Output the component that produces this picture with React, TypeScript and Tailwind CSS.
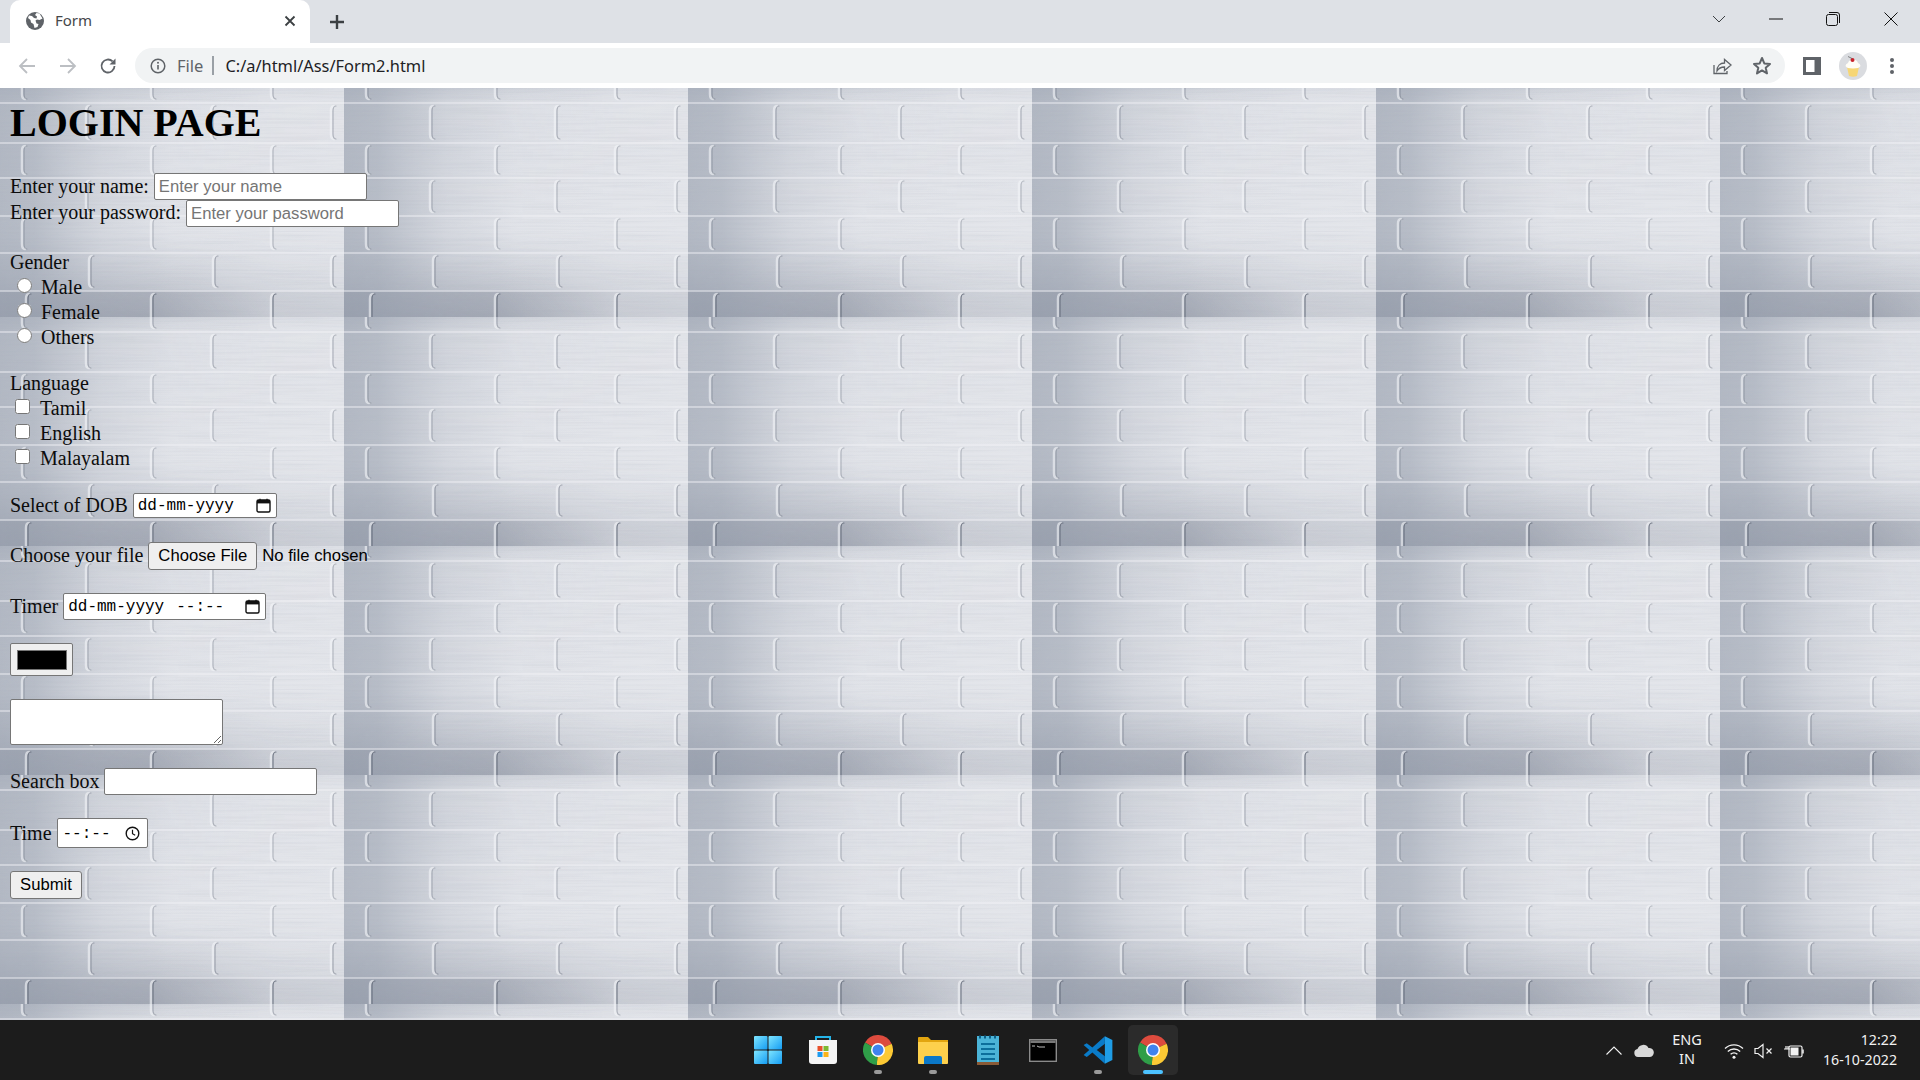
const SERIF = "font-['Liberation_Serif',serif]"

const rows: { y0: number; y1: number; xs: number[]; joint: number }[] = [
  { y0: -10, y1: 14, xs: [24, 153, 273], joint: 0.4 },
  { y0: 14, y1: 54, xs: [88, 213, 333], joint: 0.4 },
  { y0: 54, y1: 89, xs: [24, 153, 273], joint: 0.35 },
  { y0: 89, y1: 127, xs: [88, 213, 333], joint: 0.35 },
  { y0: 127, y1: 164, xs: [24, 153, 273], joint: 0.35 },
  { y0: 164, y1: 202, xs: [91, 215, 333], joint: 0.45 },
  { y0: 202, y1: 240, xs: [28, 153, 273], joint: 0.8 },
]

function BrickWall() {
  return (
    <svg className="absolute inset-0 w-full h-full" aria-hidden="true">
      <defs>
        <linearGradient id="sideShade" x1="0" x2="1" y1="0" y2="0">
          <stop offset="0" stopColor="#9aa2b0" stopOpacity="0.66" />
          <stop offset="0.1" stopColor="#9aa2b0" stopOpacity="0.6" />
          <stop offset="0.3" stopColor="#a5acb9" stopOpacity="0.24" />
          <stop offset="0.5" stopColor="#a5acb9" stopOpacity="0.04" />
          <stop offset="1" stopColor="#a5acb9" stopOpacity="0" />
        </linearGradient>
        <linearGradient id="bandShade" x1="0" x2="0" y1="0" y2="1">
          <stop offset="0" stopColor="#8f97a6" stopOpacity="0.3" />
          <stop offset="0.06" stopColor="#8f97a6" stopOpacity="0.08" />
          <stop offset="0.62" stopColor="#8f97a6" stopOpacity="0" />
          <stop offset="0.78" stopColor="#7f8797" stopOpacity="0.2" />
          <stop offset="0.88" stopColor="#7f8797" stopOpacity="0.38" />
          <stop offset="0.89" stopColor="#6f7788" stopOpacity="0.56" />
          <stop offset="1" stopColor="#6f7788" stopOpacity="0.66" />
        </linearGradient>
        <linearGradient id="bandFade" x1="0" x2="1" y1="0" y2="0">
          <stop offset="0" stopColor="#fff" />
          <stop offset="0.45" stopColor="#fff" stopOpacity="0.85" />
          <stop offset="0.8" stopColor="#fff" stopOpacity="0.35" />
          <stop offset="1" stopColor="#fff" stopOpacity="0.3" />
        </linearGradient>
        <mask id="bandMask" maskUnits="userSpaceOnUse" x="0" y="0" width="344" height="229">
          <rect width="344" height="229" fill="url(#bandFade)" />
        </mask>
        <filter id="brushed" x="0" y="0" width="100%" height="100%">
          <feTurbulence type="fractalNoise" baseFrequency="0.012 0.55" numOctaves="2" seed="4" />
          <feColorMatrix values="0 0 0 0 0.35  0 0 0 0 0.38  0 0 0 0 0.45  0 0 0 1.4 -0.55" />
        </filter>
        <pattern id="bricks" width="344" height="229" patternUnits="userSpaceOnUse">
          <rect width="344" height="229" fill="#e4e6eb" />
          <rect width="344" height="229" fill="url(#bandShade)" mask="url(#bandMask)" />
          <rect width="344" height="229" fill="url(#sideShade)" />
          <rect width="344" height="229" filter="url(#brushed)" opacity="0.18" />
          {rows.map((r) => (
            <g key={r.y0} fill="none" strokeLinecap="round">
              <path d={`M0 ${r.y1 + 1}H344`} stroke="#f2f3f6" strokeOpacity="0.45" strokeWidth="2" />
              {r.xs.map((x) => {
                const d = `M${x + 3} ${r.y0 + 4}Q${x} ${r.y0 + 4} ${x} ${r.y0 + 9}L${x} ${r.y1 - 8}Q${x} ${r.y1 - 3} ${x + 3} ${r.y1 - 3}`
                return (
                  <g key={x}>
                    <path d={d} stroke="#f4f5f8" strokeOpacity="0.6" strokeWidth="2.5" transform="translate(-2 0)" />
                    <path d={d} stroke="#5f6675" strokeOpacity={r.joint} strokeWidth="1.2" />
                  </g>
                )
              })}
            </g>
          ))}
        </pattern>
      </defs>
      <rect width="100%" height="100%" fill="url(#bricks)" />
    </svg>
  )
}

function CalendarIcon() {
  return (
    <svg width="15" height="15" viewBox="0 0 15 15" fill="none" className="shrink-0">
      <rect x="1" y="2" width="13" height="12" rx="1.5" stroke="#111" strokeWidth="1.4" />
      <rect x="1" y="2" width="13" height="3.4" fill="#111" />
      <path d="M4 .8v2M11 .8v2" stroke="#111" strokeWidth="1.3" />
    </svg>
  )
}

function ClockIcon() {
  return (
    <svg width="15" height="15" viewBox="0 0 15 15" fill="none" className="shrink-0">
      <circle cx="7.5" cy="7.5" r="6.3" stroke="#111" strokeWidth="1.4" />
      <path d="M7.5 3.8v3.9l2.7 1.6" stroke="#111" strokeWidth="1.2" />
    </svg>
  )
}

function ChromeLogo() {
  return (
    <svg width="30" height="30" viewBox="0 0 24 24">
      <path d="M12 12L1.6 6A12 12 0 0 1 22.9 7z" fill="#dd4b3e" />
      <path d="M12 12L22.9 7A12 12 0 0 1 11 24z" fill="#fcc934" />
      <path d="M12 12L11 24A12 12 0 0 1 1.6 6z" fill="#2f9e48" />
      <circle cx="12" cy="12" r="5.6" fill="#fff" />
      <circle cx="12" cy="12" r="4.4" fill="#3f83ee" />
    </svg>
  )
}

function BrowserChrome() {
  return (
    <header className="shrink-0 font-['Noto_Sans',sans-serif]">
      {/* tab strip */}
      <div className="h-[43px] bg-[#dee1e6] flex items-end relative">
        <div className="ml-[10px] w-[300px] h-[43px] mt-0 bg-white rounded-t-[10px] flex items-center pl-[16px] pr-[12px] pb-[2px] relative">
          <svg width="18" height="18" viewBox="0 0 18 18" className="shrink-0">
            <circle cx="9" cy="9" r="9" fill="#5f6368" />
            <path d="M3 3.5l3 .5 2 2 2.500 .5 .5-2-2-1.500 1.500-2 3 .5 3 5-3 1.500-2.500-.5-1.500 1 1 3 2 .5-1 3-3 1-1-4-2.500-1.500-.5-2.500-2.500-2z" fill="#fff" />
          </svg>
          <span className="ml-[11px] text-[15px] text-[#45474a]">Form</span>
          <svg width="12" height="12" viewBox="0 0 12 12" className="ml-auto mr-[2px]">
            <path d="M1.500 1.500l9 9M10.500 1.500l-9 9" stroke="#3c4043" strokeWidth="1.8" />
          </svg>
        </div>
        <svg width="16" height="16" viewBox="0 0 16 16" className="ml-[19px] self-center">
          <path d="M8 1v14M1 8h14" stroke="#3c4043" strokeWidth="2.400" />
        </svg>
        <div className="ml-auto self-start flex items-center h-[37px] text-[#202124]">
          <svg width="14" height="8" viewBox="0 0 14 8" className="mr-[43px]">
            <path d="M1 1l6 6 6-6" fill="none" stroke="#3c4043" strokeWidth="1" />
          </svg>
          <svg width="14" height="2" viewBox="0 0 14 2" className="mr-[43px]">
            <path d="M0 1h14" stroke="#111" strokeWidth="1" />
          </svg>
          <svg width="14" height="14" viewBox="0 0 14 14" className="mr-[44px]">
            <rect x=".5" y="2.500" width="11" height="11" rx="2" fill="none" stroke="#111" />
            <path d="M3 .5h8a2.500 2.500 0 0 1 2.500 2.500v8" fill="none" stroke="#111" />
          </svg>
          <svg width="14" height="14" viewBox="0 0 14 14" className="mr-[22px]">
            <path d="M.5 .5l13 13M13.500 .5l-13 13" stroke="#111" strokeWidth="1" />
          </svg>
        </div>
      </div>
      {/* toolbar */}
      <div className="h-[45px] bg-white flex items-center">
        <svg width="18" height="18" viewBox="0 0 18 18" className="ml-[18px]">
          <path d="M17 9H2M9 2L2 9l7 7" fill="none" stroke="#bcbfc3" strokeWidth="1.800" />
        </svg>
        <svg width="18" height="18" viewBox="0 0 18 18" className="ml-[23px]">
          <path d="M1 9h15M9 2l7 7-7 7" fill="none" stroke="#bcbfc3" strokeWidth="1.800" />
        </svg>
        <svg width="18" height="18" viewBox="0 0 18 18" className="ml-[22px]">
          <path d="M15.500 9a6.500 6.500 0 1 1-1.900-4.600" fill="none" stroke="#5f6368" strokeWidth="1.800" />
          <path d="M16.500 1.500v6h-6z" fill="#5f6368" />
        </svg>
        <div className="ml-[18px] w-[1650px] h-[35px] rounded-full bg-[#f1f3f4] flex items-center">
          <svg width="16" height="16" viewBox="0 0 16 16" className="ml-[15px]">
            <circle cx="8" cy="8" r="6.800" fill="none" stroke="#5f6368" strokeWidth="1.500" />
            <path d="M8 7v4.500" stroke="#5f6368" strokeWidth="1.600" />
            <circle cx="8" cy="4.800" r="1" fill="#5f6368" />
          </svg>
          <span className="ml-[11px] pt-[1px] text-[16.500px] leading-none text-[#5f6368]">File</span>
          <span className="ml-[9px] w-[2px] h-[19px] bg-[#9aa0a6]" />
          <span className="ml-[11px] pt-[1px] text-[16.400px] leading-none text-[#202124]">C:/a/html/Ass/Form2.html</span>
          <svg width="20" height="20" viewBox="0 0 20 20" className="ml-auto">
            <path d="M2 9v8.500h13v-2.500" fill="none" stroke="#5f6368" strokeWidth="1.300" />
            <path d="M5 15c0-5 3-8 7.500-8V3.500L19 9l-6.500 5.500V11C9 11 6.500 12.500 5 15z" fill="none" stroke="#5f6368" strokeWidth="1.300" />
          </svg>
          <svg width="20" height="20" viewBox="0 0 20 20" className="ml-[20px] mr-[13px]">
            <path d="M10 2l2.300 5.400 5.700.5-4.300 3.800 1.300 5.700L10 14.400l-5 3 1.300-5.700L2 7.900l5.700-.5z" fill="none" stroke="#5f6368" strokeWidth="2" strokeLinejoin="round" />
          </svg>
        </div>
        <svg width="18" height="18" viewBox="0 0 18 18" className="ml-[18px]">
          <rect width="18" height="18" fill="#5f6368" />
          <rect x="3" y="3" width="8.500" height="12" fill="#fff" />
        </svg>
        <svg width="28" height="28" viewBox="0 0 28 28" className="ml-[18px]">
          <circle cx="14" cy="14" r="14" fill="#dadce0" />
          <path d="M8 15h12l-2 9q-4 1.500-8 0z" fill="#f6d675" />
          <path d="M6.500 14q0-2 2.500-3 1-3.500 5-3.500t5 3.500q2.500 1 2.500 3-1 2.500-7.500 2.500T6.500 14z" fill="#fffdf6" />
          <circle cx="13.500" cy="8" r="2" fill="#c8242c" />
          <path d="M13 6.500L9 4.500" stroke="#555" strokeWidth=".7" />
        </svg>
        <svg width="6" height="18" viewBox="0 0 6 18" className="ml-[22px]">
          <circle cx="3" cy="3" r="2" fill="#5f6368" />
          <circle cx="3" cy="9" r="2" fill="#5f6368" />
          <circle cx="3" cy="15" r="2" fill="#5f6368" />
        </svg>
      </div>
    </header>
  )
}

function Row({ label, raised, className, children }: { label?: string; raised?: boolean; className: string; children: React.ReactNode }) {
  return (
    <div className={`flex items-center gap-[5px] ${className}`}>
      {label && <span className={raised ? 'mb-[2px]' : ''}>{label}</span>}
      {children}
    </div>
  )
}

const fieldClass =
  "h-full w-[213px] bg-white border border-[#767676] rounded-[2px] px-[4px] text-[16.67px] font-['Liberation_Sans',sans-serif] text-black placeholder:text-[#757575] outline-none"

const fakeFieldClass =
  "h-full bg-white border border-[#767676] rounded-[2px] flex items-center font-['Liberation_Mono',monospace] text-[16px] text-black"

const btnClass =
  "h-full bg-[#efefef] border border-[#767676] rounded-[3px] pb-[1px] text-[16.67px] font-['Liberation_Sans',sans-serif] text-black"

function LoginForm() {
  return (
    <form className={`relative h-full px-[10px] pt-[12px] text-[20px] leading-[23px] text-[#0c0c0c] ${SERIF}`} onSubmit={(e) => e.preventDefault()}>
      <h1 className="text-[40px] leading-[46px] font-bold text-black">LOGIN PAGE</h1>

      <Row label="Enter your name:" className="mt-[27px] h-[27px]">
        <input type="text" placeholder="Enter your name" className={fieldClass} />
      </Row>
      <Row label="Enter your password:" raised className="h-[27px]">
        <input type="password" placeholder="Enter your password" className={fieldClass} />
      </Row>

      <div className="mt-[23px] h-[25px] flex items-center">Gender</div>
      {['Male', 'Female', 'Others'].map((g) => (
        <div key={g} className="h-[25px] flex items-center">
          <input type="radio" name="gender" className="ml-[7px] w-[15px] h-[15px] self-start mt-[3px]" />
          <span className="ml-[9px]">{g}</span>
        </div>
      ))}

      <div className="mt-[21px] h-[25px] flex items-center">Language</div>
      {['Tamil', 'English', 'Malayalam'].map((l) => (
        <div key={l} className="h-[25px] flex items-center">
          <input type="checkbox" className="ml-[5px] w-[15px] h-[15px] self-start mt-[3px]" />
          <span className="ml-[10px]">{l}</span>
        </div>
      ))}

      <Row label="Select of DOB" className="mt-[22px] h-[25px]">
        <div className={`${fakeFieldClass} w-[144px] pl-[4px]`}>
          <span className="pt-[2px]">dd-mm-yyyy</span>
          <span className="ml-[22px]"><CalendarIcon /></span>
        </div>
      </Row>

      <Row label="Choose your file" raised className="mt-[24px] h-[28px]">
        <button type="button" className={`${btnClass} w-[109px]`}>Choose File</button>
        <span className="mb-[1px] text-[16.67px] font-['Liberation_Sans',sans-serif] text-black">No file chosen</span>
      </Row>

      <Row label="Timer" className="mt-[23px] h-[27px]">
        <div className={`${fakeFieldClass} w-[203px] pl-[4px]`}>
          <span className="pt-[2px]">dd-mm-yyyy</span>
          <span className="ml-[12px] pt-[2px]">--:--</span>
          <span className="ml-[21px]"><CalendarIcon /></span>
        </div>
      </Row>

      <div className="mt-[23px] h-[33px]">
        <button type="button" aria-label="Colour" className="w-[63px] h-full bg-[#efefef] border border-[#767676] rounded-[2px] flex items-center justify-center">
          <span className="block w-[50px] h-[20px] bg-black border border-[#767676]" />
        </button>
      </div>

      <div className="mt-[23px] h-[46px] flex">
        <textarea className="w-[213px] h-full bg-white border border-[#767676] rounded-[2px] outline-none" />
      </div>

      <Row label="Search box" className="mt-[23px] h-[27px]">
        <input type="search" className={fieldClass} />
      </Row>

      <Row label="Time" className="mt-[23px] h-[30px]">
        <div className={`${fakeFieldClass} w-[91px] pl-[5px]`}>
          <span className="pt-[2px]">--:--</span>
          <span className="ml-[14px]"><ClockIcon /></span>
        </div>
      </Row>

      <div className="mt-[23px] h-[28px]">
        <button type="submit" className={`${btnClass} w-[72px]`}>Submit</button>
      </div>
    </form>
  )
}

function Taskbar() {
  return (
    <footer className="shrink-0 h-[60px] bg-[#1c1c1c] flex items-center relative font-['Noto_Sans',sans-serif] text-[#f2f2f2]">
      {/* centered app icons */}
      <div className="absolute left-[743px] top-0 h-full flex items-center">
        <TaskIcon>
          <svg width="30" height="30" viewBox="0 0 30 30">
            <defs>
              <linearGradient id="winTile" x1="0" y1="0" x2="1" y2="1">
                <stop offset="0" stopColor="#7fe6ff" />
                <stop offset="1" stopColor="#149cf3" />
              </linearGradient>
            </defs>
            <rect x="1" y="1" width="13.500" height="13.500" rx="1" fill="url(#winTile)" />
            <rect x="15.500" y="1" width="13.500" height="13.500" rx="1" fill="url(#winTile)" />
            <rect x="1" y="15.500" width="13.500" height="13.500" rx="1" fill="url(#winTile)" />
            <rect x="15.500" y="15.500" width="13.500" height="13.500" rx="1" fill="url(#winTile)" />
          </svg>
        </TaskIcon>
        <TaskIcon>
          <svg width="30" height="30" viewBox="0 0 30 30">
            <path d="M8 6V2h14v4" fill="none" stroke="#25b4e8" strokeWidth="2" />
            <path d="M1 5h28v21a3 3 0 0 1-3 3H4a3 3 0 0 1-3-3z" fill="#f5f5f5" />
            <rect x="9.500" y="11" width="5" height="5" fill="#e8502a" />
            <rect x="15.500" y="11" width="5" height="5" fill="#7cb82f" />
            <rect x="9.500" y="17" width="5" height="5" fill="#1d9bf0" />
            <rect x="15.500" y="17" width="5" height="5" fill="#fbb418" />
          </svg>
        </TaskIcon>
        <TaskIcon dot><ChromeLogo /></TaskIcon>
        <TaskIcon dot>
          <svg width="30" height="30" viewBox="0 0 30 30">
            <path d="M0 3a1 1 0 0 1 1-1h9l3 3h17v4H0z" fill="#e2a50f" />
            <path d="M0 7h30v21a1 1 0 0 1-1 1H1a1 1 0 0 1-1-1z" fill="#fdd04c" />
            <path d="M6 29v-6a2 2 0 0 1 2-2h14a2 2 0 0 1 2 2v6z" fill="#0b78c8" />
          </svg>
        </TaskIcon>
        <TaskIcon>
          <svg width="24" height="30" viewBox="0 0 24 30">
            <rect x="1" y="1" width="22" height="28" fill="#4bb4d8" />
            <rect x="1" y="27" width="22" height="3" fill="#8a5a36" />
            <path d="M5 9h14M5 14h14M5 19h14M5 24h14" stroke="#0d6f9c" strokeWidth="2" />
            <path d="M3 2h2M8 2h2M13 2h2M18 2h2" stroke="#0b5e86" strokeWidth="3" />
          </svg>
        </TaskIcon>
        <TaskIcon>
          <svg width="28" height="23" viewBox="0 0 28 23">
            <rect x=".7" y=".7" width="26.600" height="21.600" fill="#000" stroke="#8b8b8b" strokeWidth="1.400" />
            <rect x="1.400" y="1.400" width="25.200" height="2.600" fill="#777" />
            <path d="M3 7h3M8 7l2 1h6" stroke="#bbb" strokeWidth="1" />
          </svg>
        </TaskIcon>
        <TaskIcon dot>
          <svg width="30" height="30" viewBox="0 0 24 24">
            <path d="M17.500 1L23.500 4V20L17.500 23z" fill="#1f9de6" />
            <path d="M17.500 1L7.500 10 3 6.500 .5 8 5 12 .5 16 3 17.500 7.500 14l10 9v-6L11 12l6.500-5z" fill="#0a7bc8" />
          </svg>
        </TaskIcon>
        <TaskIcon active><ChromeLogo /></TaskIcon>
      </div>

      {/* tray */}
      <svg width="16" height="9" viewBox="0 0 16 9" className="absolute left-[1606px] top-[26px]">
        <path d="M.5 8.500L8 1l7.500 7.500" fill="none" stroke="#f2f2f2" strokeWidth="1.100" />
      </svg>
      <svg width="20" height="13" viewBox="0 0 20 13" className="absolute left-[1634px] top-[24px]">
        <path d="M4 13a4 4 0 0 1-.5-7.900A6 6 0 0 1 14.500 4 4.500 4.500 0 0 1 16 13z" fill="#d8d8d8" />
      </svg>
      <div className="absolute left-[1667px] top-[10px] w-[40px] text-center text-[14.5px] leading-[19px]">
        <div>ENG</div>
        <div>IN</div>
      </div>
      <svg width="20" height="16" viewBox="0 0 20 16" className="absolute left-[1724px] top-[23px]">
        <path d="M1 5.500a13 13 0 0 1 18 0M3.800 8.500a9 9 0 0 1 12.400 0M6.600 11.300a5 5 0 0 1 6.800 0" fill="none" stroke="#f2f2f2" strokeWidth="1.300" />
        <circle cx="10" cy="14.200" r="1.500" fill="#f2f2f2" />
      </svg>
      <svg width="20" height="16" viewBox="0 0 20 16" className="absolute left-[1754px] top-[23px]">
        <path d="M1 5.500h3L9 1.500v13l-5-4H1z" fill="none" stroke="#f2f2f2" strokeWidth="1.200" />
        <path d="M12.500 5.500l5 5M17.500 5.500l-5 5" stroke="#f2f2f2" strokeWidth="1.200" />
      </svg>
      <svg width="21" height="16" viewBox="0 0 21 16" className="absolute left-[1784px] top-[23px]">
        <rect x="5" y="3" width="13" height="11" rx="1.500" fill="none" stroke="#f2f2f2" strokeWidth="1.200" />
        <rect x="6.500" y="4.500" width="8" height="8" fill="#f2f2f2" />
        <path d="M19 6.500v4" stroke="#f2f2f2" strokeWidth="1.500" />
        <path d="M0 6h6M2 3v3M4 3v3" stroke="#f2f2f2" strokeWidth="1.200" />
      </svg>
      <div className="absolute right-[23px] top-[10px] text-right text-[14.2px] leading-[19.500px]">
        <div>12:22</div>
        <div>16-10-2022</div>
      </div>
    </footer>
  )
}

function TaskIcon({ children, dot, active }: { children: React.ReactNode; dot?: boolean; active?: boolean }) {
  return (
    <div className={`relative w-[50px] h-[50px] mr-[5px] flex items-center justify-center rounded-[5px] ${active ? 'bg-[#2b2b2b]' : ''}`}>
      {children}
      {dot && <span className="absolute bottom-[1px] left-[21px] w-[8px] h-[4px] rounded-full bg-[#9a9a9a]" />}
      {active && <span className="absolute bottom-[1px] left-[15px] w-[20px] h-[4px] rounded-full bg-[#4cc2ff]" />}
    </div>
  )
}

export default function App() {
  return (
    <div className="w-[1920px] h-[1080px] flex flex-col overflow-hidden">
      <BrowserChrome />
      <main className="relative flex-1 min-h-0 overflow-hidden">
        <BrickWall />
        <LoginForm />
      </main>
      <Taskbar />
    </div>
  )
}
